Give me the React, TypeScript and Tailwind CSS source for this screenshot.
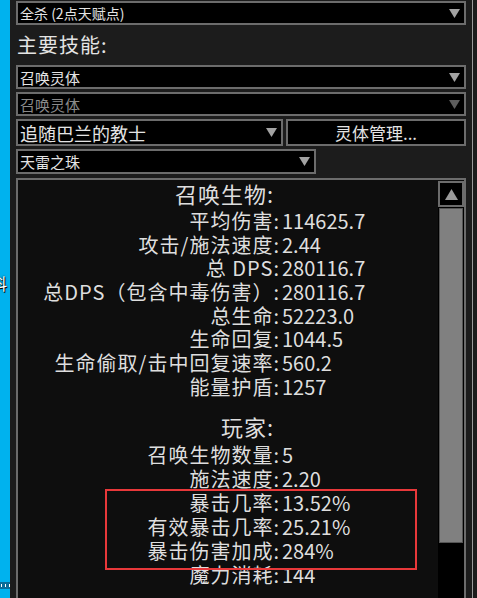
import React from "react";

const FONT = { fontFamily: '"Noto Sans CJK SC", "Noto Sans", sans-serif' };

function Down({ dim = false }: { dim?: boolean }) {
  return (
    <svg width="11" height="9" viewBox="0 0 11 9" className="shrink-0">
      <polygon points="0,0 11,0 5.5,9" fill={dim ? "#5e5e5e" : "#a3a3a3"} />
    </svg>
  );
}

function Drop({
  text,
  w,
  h = 24,
  size = 14,
  dim = false,
}: {
  text: string;
  w: string;
  h?: number;
  size?: number;
  dim?: boolean;
}) {
  return (
    <div
      className={`flex items-center justify-between bg-black border-2 border-[#6c6c6c] pl-[2px] pr-[4px] ${w}`}
      style={{ height: h }}
    >
      <span
        className={dim ? "text-[#8a8a8a]" : "text-[#e4e4e4]"}
        style={{ fontSize: size, lineHeight: 1 }}
      >
        {text}
      </span>
      <Down dim={dim} />
    </div>
  );
}

const minion: [string, string][] = [
  ["平均伤害:", "114625.7"],
  ["攻击/施法速度:", "2.44"],
  ["总 DPS:", "280116.7"],
  ["总DPS（包含中毒伤害）:", "280116.7"],
  ["总生命:", "52223.0"],
  ["生命回复:", "1044.5"],
  ["生命偷取/击中回复速率:", "560.2"],
  ["能量护盾:", "1257"],
];

const player: [string, string][] = [
  ["召唤生物数量:", "5"],
  ["施法速度:", "2.20"],
  ["暴击几率:", "13.52%"],
  ["有效暴击几率:", "25.21%"],
  ["暴击伤害加成:", "284%"],
  ["魔力消耗:", "144"],
];

function Row({ l, v, h }: { l: string; v: string; h: string }) {
  return (
    <div className={`flex items-center text-[#dedede] text-[20px] leading-none ${h}`}>
      <div className="w-[262px] text-right whitespace-nowrap tracking-[1px]">{l}</div>
      <div className="pl-[2px] whitespace-nowrap">{v}</div>
    </div>
  );
}

function Head({ t, h }: { t: string; h: string }) {
  return (
    <div className={`flex items-start pt-[2px] text-[#dedede] text-[22px] leading-none ${h}`}>
      <div className="w-[256px] text-right whitespace-nowrap tracking-[1px]">{t}</div>
    </div>
  );
}

export default function App() {
  return (
    <div className="relative flex w-[477px] h-[598px] overflow-hidden bg-[#1c1c1c]" style={FONT}>
      {/* left blue strip */}
      <div className="w-[10px] shrink-0 bg-[#00b2ee] flex flex-col overflow-hidden">
        <div className="h-[275px]" />
        <div
          className="ml-[-9px] text-[16px] leading-none text-white whitespace-nowrap"
          style={{ textShadow: "0 0 2px #000, 1px 1px 0 #000" }}
        >
          科
        </div>
        <div className="h-[291px]" />
        <div className="h-[7px] bg-[#0b6c98] flex items-center gap-[3px] pl-[1px]">
          <div className="w-[2px] h-[3px] bg-white" />
          <div className="w-[2px] h-[3px] bg-white" />
          <div className="w-[2px] h-[3px] bg-white" />
        </div>
      </div>

      {/* main panel */}
      <div className="flex-1 flex flex-col pl-[6px] pr-[6px] bg-[#1c1c1c]">
        <div className="h-[1px]" />
        <Drop text="全杀 (2点天赋点)" w="w-[450px]" h={24} size={14} />
        <div className="h-[40px] flex items-center pl-[1px] text-[#e4e4e4] text-[20px] leading-none tracking-[1px]">
          主要技能:
        </div>
        <Drop text="召唤灵体" w="w-[450px]" h={24} size={15} />
        <div className="h-[3px]" />
        <Drop text="召唤灵体" w="w-[450px]" h={24} size={15} dim />
        <div className="h-[3px]" />
        <div className="flex gap-[3px] h-[27px]">
          <Drop text="追随巴兰的教士" w="w-[267px]" h={27} size={18} />
          <div className="flex-1 flex items-center justify-center bg-black border-2 border-[#6c6c6c] text-[#e4e4e4] text-[17px] leading-none">
            灵体管理...
          </div>
        </div>
        <div className="h-[3px]" />
        <Drop text="天雷之珠" w="w-[300px]" h={25} size={15} />
        <div className="h-[4px]" />

        {/* stats box */}
        <div className="flex-1 flex border-2 border-b-0 border-[#6c6c6c] min-h-0">
          <div className="flex-1 bg-[#0e0e0e] flex flex-col">
            <Head t="召唤生物:" h="h-[29px]" />
            {minion.map(([l, v]) => (
              <Row key={l} l={l} v={v} h="h-[23.7px]" />
            ))}
            <div className="h-[14px]" />
            <Head t="玩家:" h="h-[30px]" />
            {player.map(([l, v]) => (
              <Row key={l} l={l} v={v} h="h-[24px]" />
            ))}
          </div>
          <div className="w-[26px] bg-black flex flex-col">
            <div className="h-[1px] bg-[#0e0e0e]" />
            <div className="h-[26px] border-2 border-[#6c6c6c] bg-black flex items-center justify-center">
              <svg width="13" height="11" viewBox="0 0 13 11">
                <polygon points="6.5,0 13,11 0,11" fill="#9a9a9a" />
              </svg>
            </div>
            <div className="h-[1px]" />
            <div className="h-[335px] mx-[1px] bg-[#808080] border border-[#555555]" />
          </div>
        </div>
      </div>

      {/* right edge */}
      <div className="w-[1px] bg-[#9a9a9a]" />
      <div className="w-[4px] bg-[#1c1c1c]" />

      {/* red highlight annotation */}
      <div className="absolute left-[105px] top-[489px] w-[312px] h-[81px] border-2 border-[#e8383a]" />
    </div>
  );
}
